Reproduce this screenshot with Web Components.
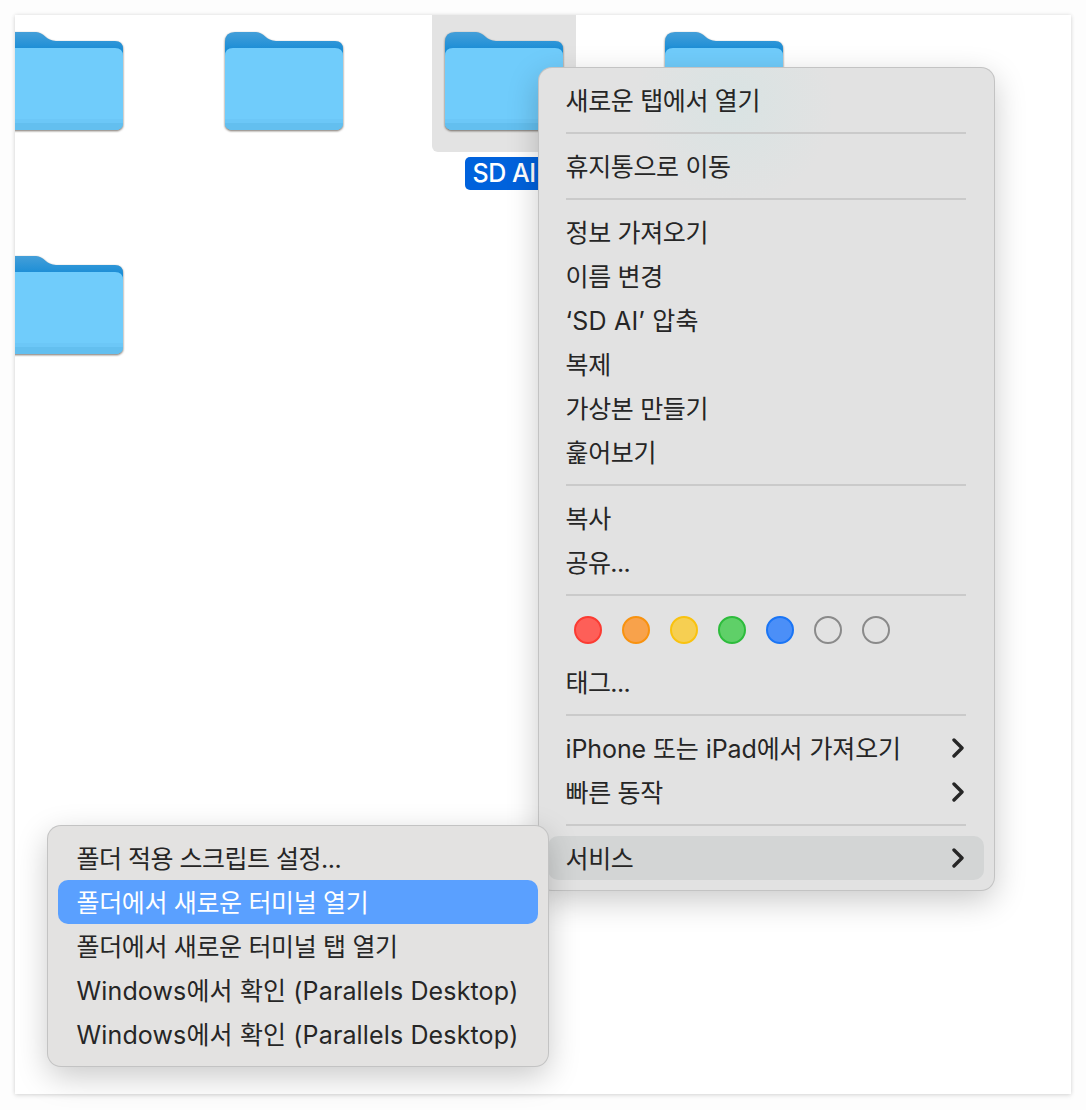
<!DOCTYPE html>
<html lang="ko">
<head>
<meta charset="utf-8">
<title>Finder</title>
<style>
    html, body {
        margin: 0;
        height: 1110px;
        overflow: hidden;
        background: #fdfdfd;
        font-family: "Inter", "Noto Sans CJK KR", sans-serif;
        color: #262626;
    }
</style>
</head>
<body>
<finder-desktop>
    <folder-item></folder-item>
    <folder-item></folder-item>
    <folder-item selected label="SD AI"></folder-item>
    <folder-item></folder-item>
    <folder-item></folder-item>

    <context-menu slot="menus" style="left:539px;top:68px;width:455px;background:radial-gradient(circle 100px at 195px 35px, #d9e3e3, #e2e2e2) #e2e2e2">
        <menu-item>새로운 탭에서 열기</menu-item>
        <menu-separator></menu-separator>
        <menu-item>휴지통으로 이동</menu-item>
        <menu-separator></menu-separator>
        <menu-item>정보 가져오기</menu-item>
        <menu-item>이름 변경</menu-item>
        <menu-item style="letter-spacing:.2px">‘SD AI’ 압축</menu-item>
        <menu-item>복제</menu-item>
        <menu-item>가상본 만들기</menu-item>
        <menu-item>훑어보기</menu-item>
        <menu-separator></menu-separator>
        <menu-item>복사</menu-item>
        <menu-item style="letter-spacing:-.6px">공유...</menu-item>
        <menu-separator></menu-separator>
        <tag-dots></tag-dots>
        <menu-item style="letter-spacing:-.6px">태그...</menu-item>
        <menu-separator></menu-separator>
        <menu-item submenu style="letter-spacing:-.1px">iPhone 또는 iPad에서 가져오기</menu-item>
        <menu-item submenu>빠른 동작</menu-item>
        <menu-separator></menu-separator>
        <menu-item submenu state="open">서비스</menu-item>
    </context-menu>

    <context-menu slot="menus" style="left:48px;top:826px;width:500px;padding-left:10px;background:#e3e2e1;--item-inset:18.5px">
        <menu-item style="letter-spacing:-.5px">폴더 적용 스크립트 설정...</menu-item>
        <menu-item state="active">폴더에서 새로운 터미널 열기</menu-item>
        <menu-item>폴더에서 새로운 터미널 탭 열기</menu-item>
        <menu-item style="letter-spacing:.14px">Windows에서 확인 (Parallels Desktop)</menu-item>
        <menu-item style="letter-spacing:.14px">Windows에서 확인 (Parallels Desktop)</menu-item>
    </context-menu>
</finder-desktop>

<script>
class FinderDesktop extends HTMLElement {
    constructor() {
        super()
        this.shadowDOM = this.attachShadow({mode: "open"})
        this.shadowDOM.innerHTML = `
            <style>
                :host {
                    display: block;
                    position: relative;
                    width: 1086px;
                    height: 1110px;
                    padding: 15px 15px 16px;
                    box-sizing: border-box;
                }
                .window {
                    height: 100%;
                    background: #fff;
                    overflow: hidden;
                    box-shadow: 0 0 4px rgba(0, 0, 0, 0.12), 0 2px 5px rgba(0, 0, 0, 0.08);
                }
                .grid {
                    display: grid;
                    grid-template-columns: repeat(4, 144px);
                    grid-auto-rows: 175px;
                    column-gap: 76px;
                    row-gap: 49px;
                    margin-left: -23px;
                }
            </style>
            <div class="window"><div class="grid"><slot></slot></div></div>
            <slot name="menus"></slot>
        `
    }
}

class FolderItem extends HTMLElement {
    constructor() {
        super()
        this.shadowDOM = this.attachShadow({mode: "open"})
    }

    connectedCallback() {
        const label = this.getAttribute("label")
        this.shadowDOM.innerHTML = `
            <style>
                :host {
                    display: flex;
                    flex-direction: column;
                    align-items: center;
                }
                .thumb {
                    width: 144px;
                    height: 137px;
                    box-sizing: border-box;
                    padding-top: 17px;
                    display: flex;
                    justify-content: center;
                    border-radius: 0 0 6px 6px;
                }
                :host([selected]) .thumb {
                    background: #e3e3e3;
                }
                svg {
                    display: block;
                    overflow: visible;
                    filter: drop-shadow(0 1px 1px rgba(60, 50, 40, 0.7));
                }
                .label {
                    margin-top: 5px;
                    height: 33px;
                    padding: 0 8px;
                    border-radius: 5px;
                    background: #0062dc;
                    color: #fff;
                    font-size: 25px;
                    font-weight: 500;
                    letter-spacing: -0.5px;
                    line-height: 33px;
                }
            </style>
            <div class="thumb">
                <svg width="118" height="98" viewBox="0 0 118 98">
                    <defs>
                        <linearGradient id="back" x1="0" y1="0" x2="0" y2="1">
                            <stop offset="0" stop-color="#449fd9"/>
                            <stop offset="0.45" stop-color="#1a8dd6"/>
                        </linearGradient>
                    </defs>
                    <path fill="url(#back)" d="M0 10 Q0 0 10 0 H31 C39 0 41 9 51 9 H110 Q118 9 118 17 V40 H0 Z"/>
                    <path fill="#70ccfb" d="M0 24 Q0 16 8 16 H110 Q118 16 118 24 V90 Q118 98 110 98 H8 Q0 98 0 90 Z"/>
                    <path fill="#6cc7f7" d="M0 87 H118 V90 Q118 98 110 98 H8 Q0 98 0 90 Z"/>
                    <path fill="#63bfef" d="M0 91 H118 Q118 98 110 98 H8 Q0 98 0 91 Z"/>
                </svg>
            </div>
            ${label ? `<div class="label">${label}</div>` : ""}
        `
    }
}

class ContextMenu extends HTMLElement {
    constructor() {
        super()
        this.shadowDOM = this.attachShadow({mode: "open"})
        this.shadowDOM.innerHTML = `
            <style>
                :host {
                    display: block;
                    position: absolute;
                    box-sizing: border-box;
                    padding: 10px 10px 10px 9px;
                    border-radius: 13px;
                    background: #e2e2e2;
                    box-shadow: 0 0 0 1px #c3c3c3, 0 10px 32px rgba(0, 0, 0, 0.22);
                }
            </style>
            <slot></slot>
        `
    }
}

class MenuItem extends HTMLElement {
    constructor() {
        super()
        this.shadowDOM = this.attachShadow({mode: "open"})
    }

    connectedCallback() {
        const arrow = this.hasAttribute("submenu") ? `
            <svg width="12" height="20" viewBox="0 0 12 20">
                <path d="M2 2 L10 10 L2 18" fill="none" stroke="#262626" stroke-width="3.4" stroke-linecap="round" stroke-linejoin="round"/>
            </svg>` : ""
        this.shadowDOM.innerHTML = `
            <style>
                :host {
                    display: flex;
                    align-items: center;
                    justify-content: space-between;
                    box-sizing: border-box;
                    height: 44px;
                    padding: 0 20px 2px var(--item-inset, 17.5px);
                    border-radius: 10px;
                    font-size: 25px;
                    letter-spacing: -0.35px;
                    white-space: nowrap;
                }
                :host([state="open"]) { background: #d3d5d5; }
                :host([state="active"]) { background: #5aa0ff; color: #fff; }
                svg { margin-top: 2px; }
            </style>
            <slot></slot>${arrow}
        `
    }
}

class MenuSeparator extends HTMLElement {
    constructor() {
        super()
        this.attachShadow({mode: "open"}).innerHTML = `
            <style>
                :host {
                    display: block;
                    height: 2px;
                    margin: 10px 18px;
                    background: #cacaca;
                }
            </style>
        `
    }
}

class TagDots extends HTMLElement {
    constructor() {
        super()
        const colors = [
            ["#fe5f58", "#fb3b32"],
            ["#f8a24b", "#f8920f"],
            ["#f6cf52", "#f9c20f"],
            ["#5fd068", "#2dbc3c"],
            ["#4b8ff8", "#1a75f5"],
            ["transparent", "#8a8a8a"],
            ["transparent", "#8a8a8a"],
        ]
        const dots = colors.map(c => `<i style="background:${c[0]};border-color:${c[1]}"></i>`).join("")
        this.attachShadow({mode: "open"}).innerHTML = `
            <style>
                :host {
                    display: flex;
                    gap: 20px;
                    align-items: center;
                    height: 54px;
                    padding: 0 0 6px 26px;
                    box-sizing: border-box;
                }
                i {
                    width: 28px;
                    height: 28px;
                    box-sizing: border-box;
                    border: 2px solid;
                    border-radius: 50%;
                }
            </style>
            ${dots}
        `
    }
}

customElements.define("finder-desktop", FinderDesktop)
customElements.define("folder-item", FolderItem)
customElements.define("context-menu", ContextMenu)
customElements.define("menu-item", MenuItem)
customElements.define("menu-separator", MenuSeparator)
customElements.define("tag-dots", TagDots)
</script>
</body>
</html>
